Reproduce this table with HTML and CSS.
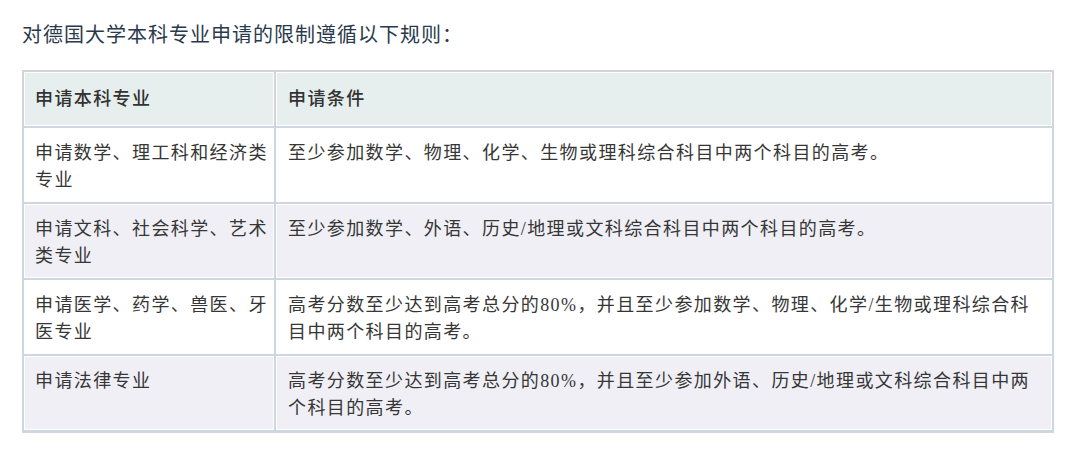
FILE: index.html
```html
<!DOCTYPE html>
<html lang="zh-CN">
<head>
<meta charset="utf-8">
<title>德国大学本科专业申请</title>
<link rel="stylesheet" href="styles.css">
</head>
<body>
<main class="page">
  <h1 class="title">对德国大学本科专业申请的限制遵循以下规则：</h1>
  <table class="rules">
    <colgroup>
      <col class="col-major">
      <col class="col-cond">
    </colgroup>
    <thead>
      <tr>
        <th>申请本科专业</th>
        <th>申请条件</th>
      </tr>
    </thead>
    <tbody>
      <tr>
        <td>申请数学、理工科和经济类专业</td>
        <td>至少参加数学、物理、化学、生物或理科综合科目中两个科目的高考。</td>
      </tr>
      <tr class="alt">
        <td>申请文科、社会科学、艺术类专业</td>
        <td>至少参加数学、外语、历史/地理或文科综合科目中两个科目的高考。</td>
      </tr>
      <tr>
        <td>申请医学、药学、兽医、牙医专业</td>
        <td>高考分数至少达到高考总分的80%，并且至少参加数学、物理、化学/生物或理科综合科目中两个科目的高考。</td>
      </tr>
      <tr class="alt">
        <td>申请法律专业</td>
        <td>高考分数至少达到高考总分的80%，并且至少参加外语、历史/地理或文科综合科目中两个科目的高考。</td>
      </tr>
    </tbody>
  </table>
</main>
</body>
</html>
```

FILE: styles.css
```css
html, body {
  margin: 0;
  padding: 0;
  background: #ffffff;
}

.page {
  padding: 21px 26px 0 22px;
  font-family: "Liberation Serif", "Noto Sans CJK SC", serif;
}

.title {
  margin: 0 0 21px 0;
  font-size: 20px;
  line-height: 28px;
  font-weight: 400;
  letter-spacing: 1px;
  color: #2a3a4c;
}

.rules {
  width: 1032px;
  table-layout: fixed;
  border-collapse: separate;
  border-spacing: 0;
  font-size: 18px;
  line-height: 27px;
  letter-spacing: 1.4px;
  color: #363636;
}

.col-major {
  width: 254px;
}

.col-cond {
  width: 778px;
}

.rules th,
.rules td {
  box-sizing: border-box;
  text-align: left;
  vertical-align: top;
  box-shadow: inset 0 0 0 1px #ffffff;
}

.rules th {
  padding: 14px 14px 13px 11px;
  font-weight: 500;
  color: #333333;
  background: #e6eeee;
  border-top: 2px solid #d2d4d5;
  border-right: 2px solid #d2d4d5;
  border-bottom: 2px solid #d0d8df;
}

.rules td {
  padding: 12px 14px 8px 11px;
  background: #ffffff;
  border-right: 2px solid #cdd7e1;
  border-bottom: 2px solid #cdd7e1;
}

.rules th:first-child {
  border-left: 2px solid #d2d4d5;
  padding-right: 3px;
}

.rules td:first-child {
  border-left: 2px solid #cdd7e1;
  padding-right: 3px;
}

.rules th + th,
.rules td + td {
  padding-left: 12px;
}

.rules tr.alt td {
  background: #efeff5;
}

.rules tbody tr:last-child td {
  border-bottom-width: 3px;
}
```
